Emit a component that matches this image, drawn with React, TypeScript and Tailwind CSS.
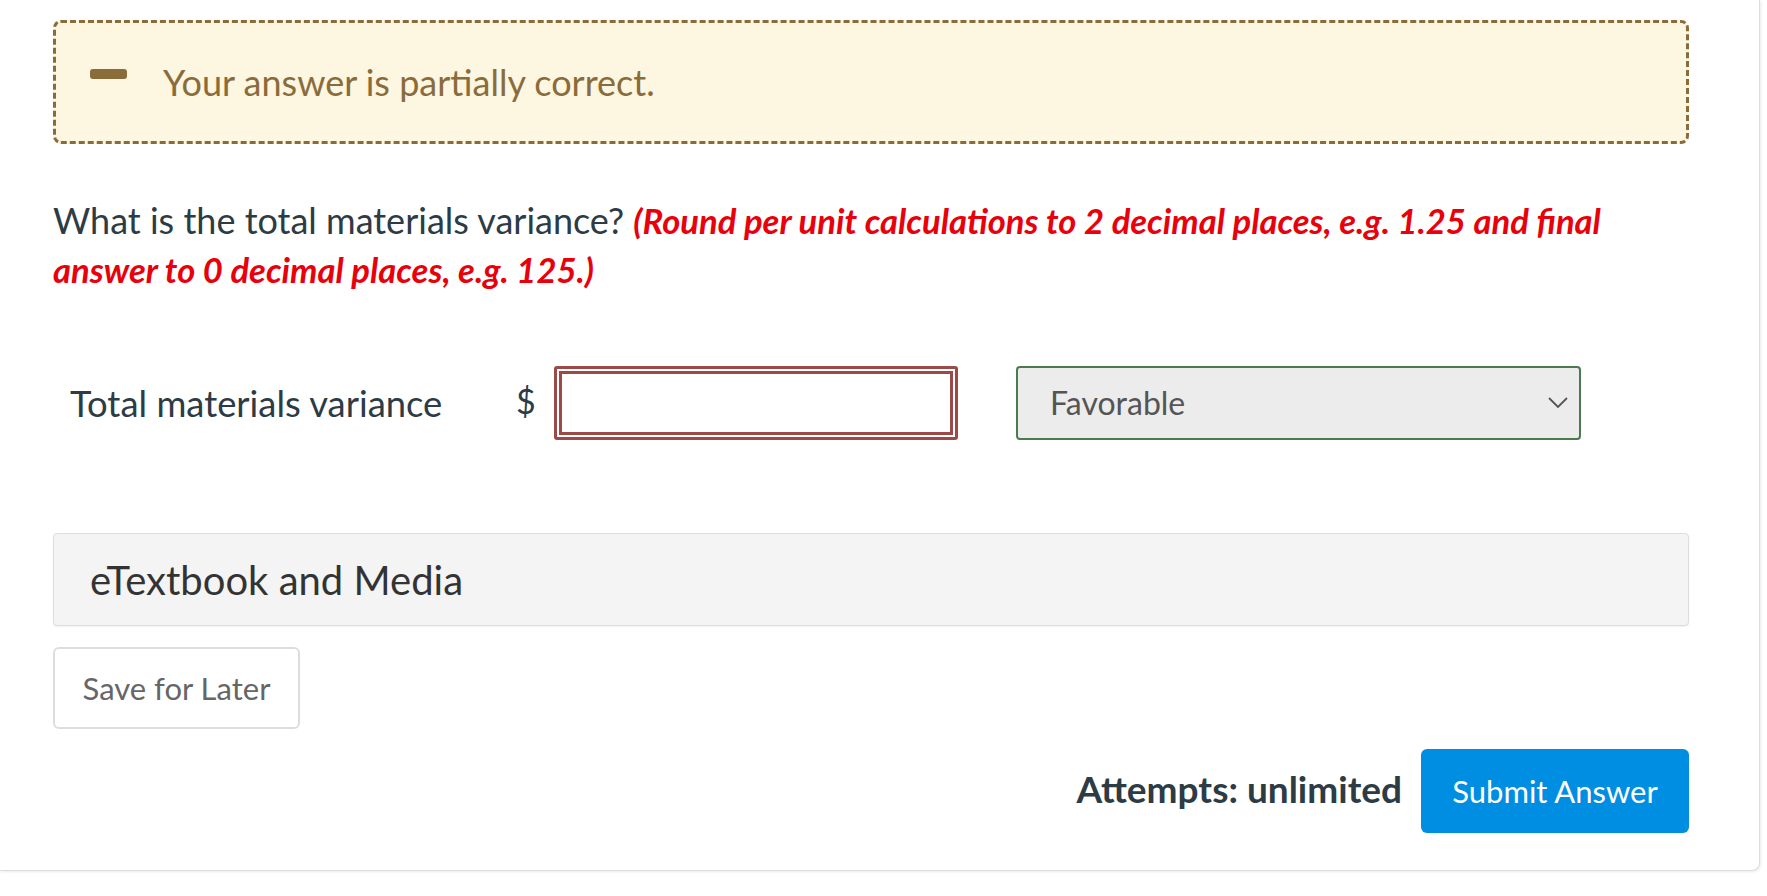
import React from "react";

export default function App() {
  return (
    <div className="min-h-[896px] w-full bg-white font-['Lato','Noto_Sans',sans-serif]">
      <div className="w-[1760px] h-[871px] bg-white border-r border-b border-[#dcdcdc] rounded-br-[8px] shadow-[1px_1px_3px_rgba(0,0,0,0.08)] pl-[53px] pr-[70px] pt-[20px] flex flex-col">
        {/* Alert */}
        <div className="h-[124px] rounded-[8px] border-[3px] border-dashed border-[#8a6c3b] bg-[#fdf6e0] flex items-start pl-[34px]">
          <div className="mt-[46px] w-[37px] h-[10px] rounded-[3px] bg-[#8a6c3b]" />
          <div className="ml-[36px] mt-[37px] text-[36px] leading-[44px] text-[#8a6c3b]">
            Your answer is partially correct.
          </div>
        </div>

        {/* Question */}
        <p className="mt-[52px] text-[36px] leading-[49px] text-[#2d3b45]">
          What is the total materials variance?{" "}
          <span className="italic font-bold text-[34.6px] text-[#e8000b]">
            (Round per unit calculations to 2 decimal places, e.g. 1.25 and final answer to 0 decimal places, e.g. 125.)
          </span>
        </p>

        {/* Answer row */}
        <div className="mt-[72px] h-[74px] flex items-center">
          <div className="w-[463px] pl-[17px] text-[36.4px] text-[#2d3b45]">Total materials variance</div>
          <div className="w-[38px] text-[34px] text-[#2d3b45] -mt-[6px]">$</div>
          <div className="w-[404px] h-[74px] rounded-[3px] border-[3px] border-[#9b4a47] p-[2px] bg-white">
            <input
              type="text"
              className="w-full h-full border-[3px] border-[#9b4a47] outline-none bg-white px-2 text-[28px]"
            />
          </div>
          <div className="ml-[58px] w-[565px] h-[74px] rounded-[4px] border-2 border-[#4a7a4e] bg-[#ececec] flex items-center justify-between pl-[32px] pr-[10px]">
            <span className="text-[32px] text-[#555555]">Favorable</span>
            <svg width="22" height="14" viewBox="0 0 22 14" fill="none">
              <path d="M2 2 L11 11 L20 2" stroke="#555555" strokeWidth="1.8" />
            </svg>
          </div>
        </div>

        {/* eTextbook */}
        <div className="mt-[93px] h-[93px] rounded-[4px] border border-[#dddddd] bg-[#f4f4f4] shadow-[0_1px_2px_rgba(0,0,0,0.06)] flex items-center pl-[36px]">
          <span className="text-[40px] text-[#333333]">eTextbook and Media</span>
        </div>

        {/* Save for later */}
        <div className="mt-[21px]">
          <button className="w-[247px] h-[82px] rounded-[6px] border-2 border-[#dddddd] bg-white text-[31px] text-[#666666]">
            Save for Later
          </button>
        </div>

        {/* Bottom row */}
        <div className="mt-[20px] flex items-center justify-end gap-[19px]">
          <span className="text-[37px] font-bold text-[#2d3b45] -mt-[4px]">Attempts: unlimited</span>
          <button className="w-[268px] h-[84px] rounded-[6px] bg-[#008ee2] text-white text-[31px]">
            Submit Answer
          </button>
        </div>
      </div>
    </div>
  );
}
